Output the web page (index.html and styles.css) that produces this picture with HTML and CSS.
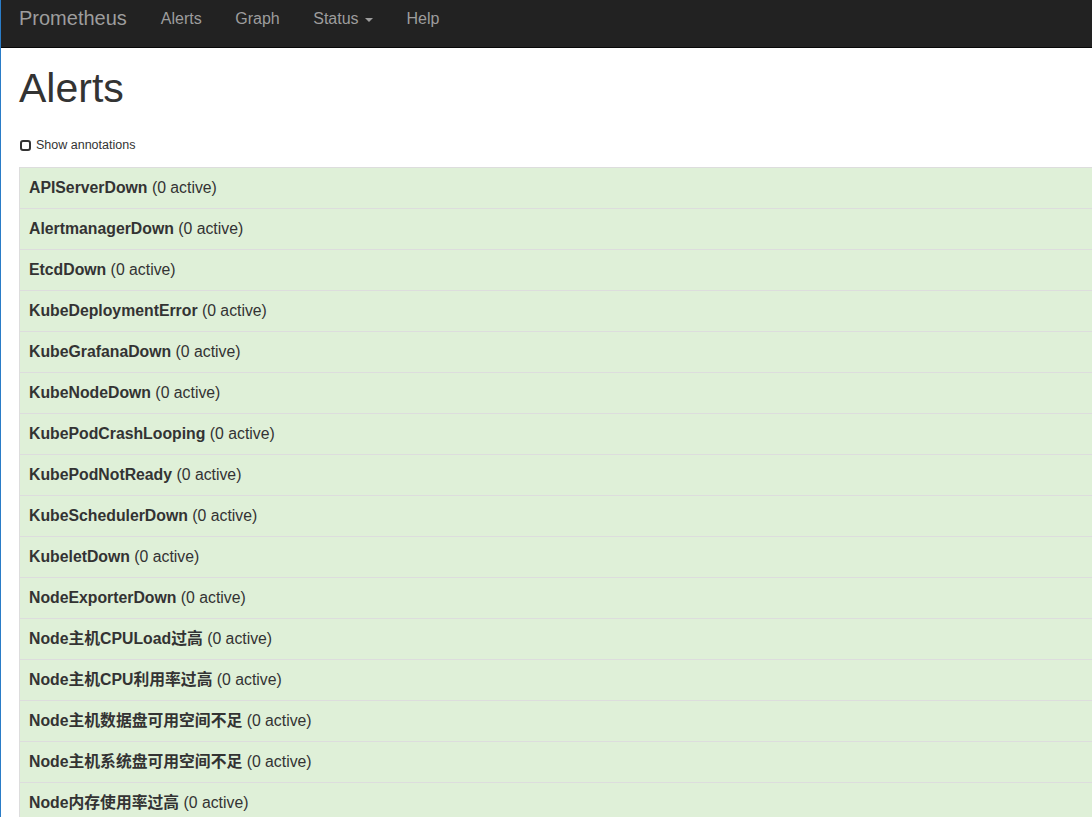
FILE: index.html
```html
<!DOCTYPE html>
<html lang="zh-CN">
<head>
<meta charset="utf-8">
<title>Prometheus Time Series Collection and Processing Server</title>
<link rel="stylesheet" href="styles.css">
</head>
<body>
<nav class="navbar">
  <a class="brand" href="#">Prometheus</a>
  <ul class="nav">
    <li><a href="#">Alerts</a></li>
    <li><a href="#">Graph</a></li>
    <li><a href="#">Status <span class="caret"></span></a></li>
    <li><a href="#">Help</a></li>
  </ul>
</nav>
<main class="container">
  <h1 class="title">Alerts</h1>
  <label class="annotations"><span class="check"></span>Show annotations</label>
  <table class="alerts">
    <tbody>
      <tr><td><b>APIServerDown</b> (0 active)</td></tr>
      <tr><td><b>AlertmanagerDown</b> (0 active)</td></tr>
      <tr><td><b>EtcdDown</b> (0 active)</td></tr>
      <tr><td><b>KubeDeploymentError</b> (0 active)</td></tr>
      <tr><td><b>KubeGrafanaDown</b> (0 active)</td></tr>
      <tr><td><b>KubeNodeDown</b> (0 active)</td></tr>
      <tr><td><b>KubePodCrashLooping</b> (0 active)</td></tr>
      <tr><td><b>KubePodNotReady</b> (0 active)</td></tr>
      <tr><td><b>KubeSchedulerDown</b> (0 active)</td></tr>
      <tr><td><b>KubeletDown</b> (0 active)</td></tr>
      <tr><td><b>NodeExporterDown</b> (0 active)</td></tr>
      <tr><td><b>Node主机CPULoad过高</b> (0 active)</td></tr>
      <tr><td><b>Node主机CPU利用率过高</b> (0 active)</td></tr>
      <tr><td><b>Node主机数据盘可用空间不足</b> (0 active)</td></tr>
      <tr><td><b>Node主机系统盘可用空间不足</b> (0 active)</td></tr>
      <tr><td><b>Node内存使用率过高</b> (0 active)</td></tr>
    </tbody>
  </table>
</main>
</body>
</html>
```
FILE: styles.css
```css
html, body {
  margin: 0;
  padding: 0;
}
body {
  font-family: "Liberation Sans", Arial, "Noto Sans CJK SC", sans-serif;
  color: #333;
  background: #fff;
  border-left: 1px solid #2a7cc7;
  min-height: 817px;
  box-sizing: border-box;
  overflow: hidden;
}
a { text-decoration: none; }

.navbar {
  display: flex;
  align-items: flex-start;
  height: 47px;
  background: #222;
  border-bottom: 1px solid #080808;
}
.brand {
  color: #9d9d9d;
  font-size: 20px;
  line-height: 24px;
  padding: 6px 17px 7px 18px;
}
.nav {
  display: flex;
  list-style: none;
  margin: 0;
  padding: 0;
}
.nav a {
  display: block;
  color: #9d9d9d;
  font-size: 16px;
  line-height: 22px;
  padding: 8px 16.5px 8px 17px;
}
.caret {
  display: inline-block;
  width: 0;
  height: 0;
  margin-left: 2px;
  vertical-align: middle;
  border-top: 4px solid #9d9d9d;
  border-left: 4px solid transparent;
  border-right: 4px solid transparent;
}

.container {
  padding-left: 18px;
}
.title {
  font-size: 41px;
  font-weight: 400;
  line-height: 45px;
  margin: 18px 0 0 0;
  color: #333;
}
.annotations {
  display: flex;
  align-items: center;
  font-size: 12.5px;
  line-height: 18px;
  margin-top: 25px;
  color: #333;
}
.check {
  display: inline-block;
  width: 7px;
  height: 7px;
  border: 2px solid #333;
  border-radius: 3px;
  margin: 0 5px 0 1px;
}
.alerts {
  width: 100%;
  border-collapse: collapse;
  margin-top: 13px;
  border-left: 1px solid #ddd;
  border-top: 1px solid #ddd;
}
.alerts td {
  background: #dff0d8;
  border-bottom: 1px solid #ddd;
  padding: 8px 9px;
  font-size: 15.8px;
  line-height: 24px;
}
.alerts b {
  font-weight: 700;
}
```
